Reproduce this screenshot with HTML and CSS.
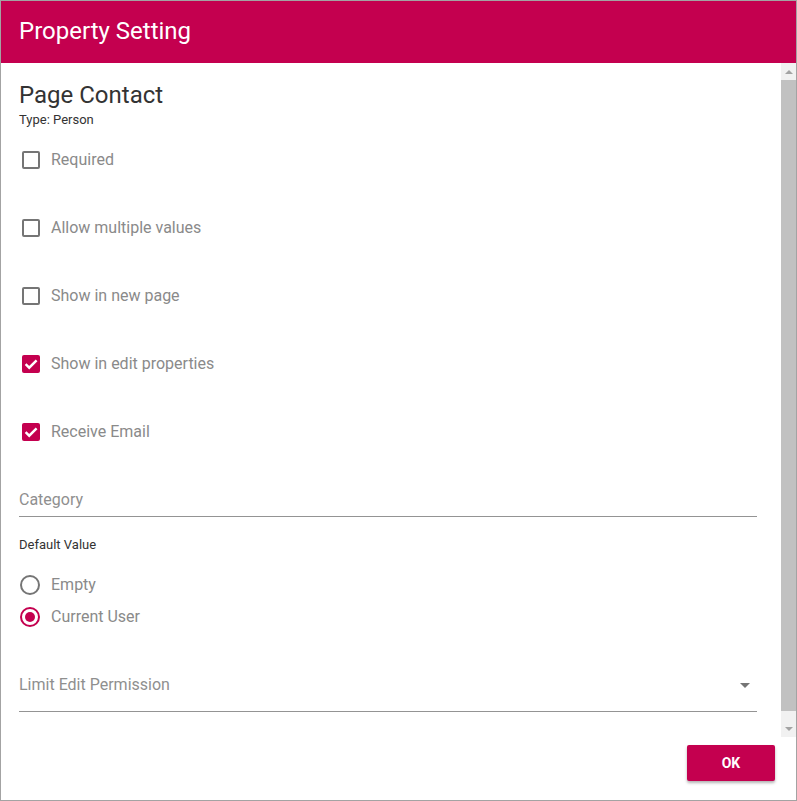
FILE: index.html
```html
<!DOCTYPE html>
<html lang="en">
<head>
<meta charset="utf-8">
<title>Property Setting</title>
<link rel="stylesheet" href="styles.css">
</head>
<body>
<div class="dialog">
  <header class="dialog-header">
    <h1 class="dialog-title">Property Setting</h1>
  </header>
  <div class="dialog-body">
    <div class="body-scroll">
      <div class="body-inner">
        <h2 class="prop-name">Page Contact</h2>
        <div class="prop-type">Type: Person</div>

        <div class="options">
          <label class="check-row">
            <span class="checkbox"></span>
            <span class="opt-label">Required</span>
          </label>
          <label class="check-row">
            <span class="checkbox"></span>
            <span class="opt-label">Allow multiple values</span>
          </label>
          <label class="check-row">
            <span class="checkbox"></span>
            <span class="opt-label">Show in new page</span>
          </label>
          <label class="check-row">
            <span class="checkbox is-checked">
              <svg viewBox="0 0 18 18" width="18" height="18"><path d="M3.6 9.2l3.6 3.5L14.6 5.3" fill="none" stroke="#fff" stroke-width="2.4"/></svg>
            </span>
            <span class="opt-label">Show in edit properties</span>
          </label>
          <label class="check-row">
            <span class="checkbox is-checked">
              <svg viewBox="0 0 18 18" width="18" height="18"><path d="M3.6 9.2l3.6 3.5L14.6 5.3" fill="none" stroke="#fff" stroke-width="2.4"/></svg>
            </span>
            <span class="opt-label">Receive Email</span>
          </label>
        </div>

        <div class="text-field">
          <span class="placeholder">Category</span>
        </div>

        <div class="section-label">Default Value</div>
        <div class="radios">
          <label class="radio-row">
            <span class="radio"></span>
            <span class="opt-label">Empty</span>
          </label>
          <label class="radio-row">
            <span class="radio is-checked"><span class="radio-dot"></span></span>
            <span class="opt-label">Current User</span>
          </label>
        </div>

        <div class="select-field">
          <span class="placeholder">Limit Edit Permission</span>
          <span class="select-arrow"></span>
        </div>
      </div>
    </div>
    <div class="scrollbar" aria-hidden="true">
      <div class="sb-button"><span class="sb-arrow-up"></span></div>
      <div class="sb-track"><div class="sb-thumb"></div></div>
      <div class="sb-button"><span class="sb-arrow-down"></span></div>
    </div>
  </div>
  <footer class="dialog-footer">
    <button class="btn-ok" type="button">OK</button>
  </footer>
</div>
</body>
</html>
```
FILE: styles.css
```css
* { box-sizing: border-box; }

html, body {
  margin: 0;
  padding: 0;
  background: #fff;
}

body {
  font-family: Roboto, "Liberation Sans", Arial, sans-serif;
  width: 797px;
  height: 801px;
  overflow: hidden;
}

.dialog {
  width: 797px;
  height: 801px;
  border: 1px solid #a3a3a3;
  display: flex;
  flex-direction: column;
  background: #fff;
}

.dialog-header {
  height: 62px;
  flex: 0 0 62px;
  background: #c4004f;
  display: flex;
  align-items: center;
  padding-left: 18px;
}

.dialog-title {
  margin: 0;
  color: #fff;
  font-size: 24px;
  font-weight: 400;
  line-height: 32px;
  position: relative;
  top: -1px;
}

.dialog-body {
  flex: 0 0 674px;
  height: 674px;
  display: flex;
}

.body-scroll {
  flex: 1 1 auto;
  overflow: hidden;
}

.body-inner {
  padding: 16px 24px 36px 18px;
}

/* fake classic scrollbar */
.scrollbar {
  flex: 0 0 15px;
  width: 15px;
  background: #f1f1f1;
  display: flex;
  flex-direction: column;
}

.sb-button {
  height: 17px;
  flex: 0 0 17px;
  display: flex;
  align-items: center;
  justify-content: center;
}

.sb-arrow-up {
  width: 0;
  height: 0;
  border-left: 4px solid transparent;
  border-right: 4px solid transparent;
  border-bottom: 4px solid #a3a3a3;
}

.sb-arrow-down {
  width: 0;
  height: 0;
  border-left: 4px solid transparent;
  border-right: 4px solid transparent;
  border-top: 4px solid #a3a3a3;
}

.sb-track {
  flex: 1 1 auto;
  padding: 0 2px;
}

.sb-thumb {
  height: 631px;
  background: #c1c1c1;
  margin: 0 -2px;
}

.prop-name {
  margin: 0;
  font-size: 24px;
  font-weight: 400;
  line-height: 32px;
  color: #333;
}

.prop-type {
  font-size: 13px;
  line-height: 16px;
  color: #333;
  margin-top: 1px;
}

.options {
  margin-top: 12px;
  display: flex;
  flex-direction: column;
  gap: 28px;
}

.check-row {
  height: 40px;
  display: flex;
  align-items: center;
}

.checkbox {
  width: 18px;
  height: 18px;
  margin-left: 3px;
  margin-right: 11px;
  border: 2px solid #757575;
  border-radius: 2px;
  flex: 0 0 18px;
  display: flex;
  align-items: center;
  justify-content: center;
}

.checkbox.is-checked {
  border: none;
  background: #c4004f;
}

.opt-label {
  font-size: 16px;
  color: #8a8a8a;
  line-height: 24px;
}

.text-field {
  margin-top: 36px;
  border-bottom: 1px solid #949494;
  padding-bottom: 4px;
}

.placeholder {
  display: block;
  font-size: 16px;
  line-height: 24px;
  color: #8f8f8f;
}

.section-label {
  margin-top: 20px;
  font-size: 13px;
  line-height: 16px;
  color: #333;
}

.radios {
  margin-top: 16px;
  display: flex;
  flex-direction: column;
}

.radio-row {
  height: 32px;
  display: flex;
  align-items: center;
}

.radio {
  width: 20px;
  height: 20px;
  margin-left: 1px;
  margin-right: 11px;
  border: 2px solid #757575;
  border-radius: 50%;
  flex: 0 0 20px;
  display: flex;
  align-items: center;
  justify-content: center;
}

.radio.is-checked {
  border-color: #c4004f;
}

.radio-dot {
  width: 10px;
  height: 10px;
  border-radius: 50%;
  background: #c4004f;
}

.select-field {
  margin-top: 40px;
  border-bottom: 1px solid #949494;
  padding-bottom: 14px;
  display: flex;
  align-items: center;
  justify-content: space-between;
}

.select-arrow {
  width: 0;
  height: 0;
  border-left: 5px solid transparent;
  border-right: 5px solid transparent;
  border-top: 5px solid #757575;
  margin-right: 7px;
}

.dialog-footer {
  flex: 1 1 auto;
  display: flex;
  justify-content: flex-end;
  align-items: flex-start;
  padding: 8px 21px 0 0;
}

.btn-ok {
  width: 88px;
  height: 36px;
  border: none;
  border-radius: 2px;
  background: #c4004f;
  color: #fff;
  font-family: Roboto, "Liberation Sans", Arial, sans-serif;
  font-size: 14px;
  font-weight: 700;
  box-shadow: 0 2px 3px rgba(0, 0, 0, 0.3);
}
```
